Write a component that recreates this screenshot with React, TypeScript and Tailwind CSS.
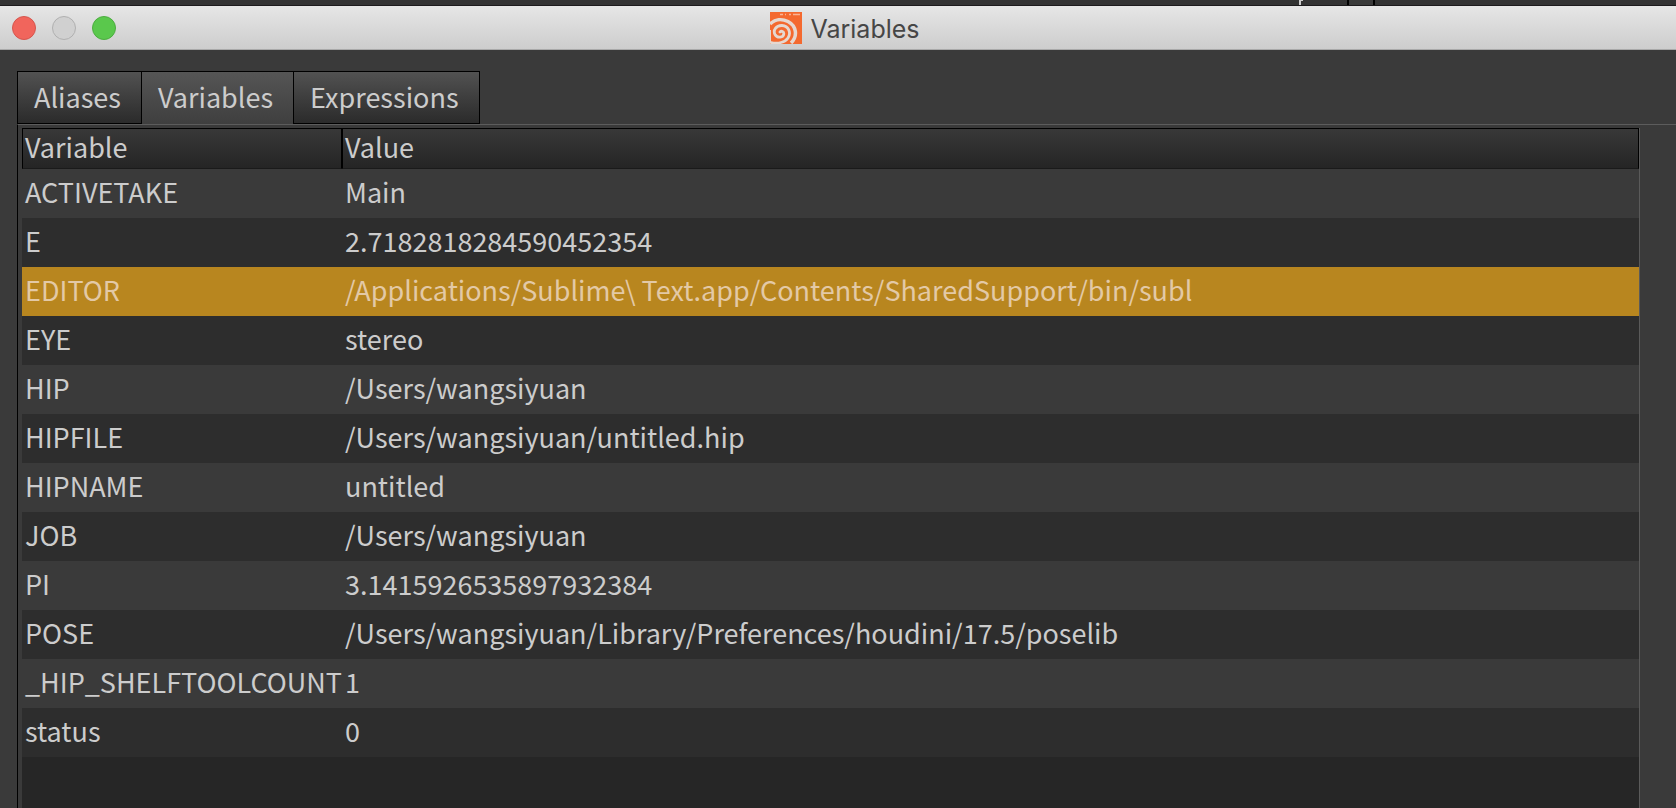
const tabs = ['Aliases', 'Variables', 'Expressions'];

const variables = [
  { name: 'ACTIVETAKE', value: 'Main' },
  { name: 'E', value: '2.7182818284590452354' },
  { name: 'EDITOR', value: '/Applications/Sublime\\ Text.app/Contents/SharedSupport/bin/subl' },
  { name: 'EYE', value: 'stereo' },
  { name: 'HIP', value: '/Users/wangsiyuan' },
  { name: 'HIPFILE', value: '/Users/wangsiyuan/untitled.hip' },
  { name: 'HIPNAME', value: 'untitled' },
  { name: 'JOB', value: '/Users/wangsiyuan' },
  { name: 'PI', value: '3.1415926535897932384' },
  { name: 'POSE', value: '/Users/wangsiyuan/Library/Preferences/houdini/17.5/poselib' },
  { name: '_HIP_SHELFTOOLCOUNT', value: '1' },
  { name: 'status', value: '0' }
];

const activeTab = 'Variables';
const selected = 'EDITOR';

function HoudiniLogo() {
  return (
    <svg className="w-8 h-8" viewBox="0 0 32 32" aria-hidden="true">
      <rect width="32" height="32" fill="#f4692f" />
      <path d="M10 2.5h3M15 2.5h1M19 2.5h2M23 2.5h7" stroke="#f9b494" strokeWidth="1.5" />
      <path
        d="M0 12C5 7 12 6.500 18 9.500C26.500 14 28 24 21 31"
        fill="none"
        stroke="#e6d8d0"
        strokeWidth="3.500"
      />
      <path
        d="M1 30.500C8 32 15 30.500 18 26C21.500 20.500 18.500 13.800 12 13.500C6 13.300 2.800 18.500 5 22.500C7.500 26.800 13.500 25.500 13.800 21.800C13.900 19.500 11.500 18.500 10 20"
        fill="none"
        stroke="#e6d8d0"
        strokeWidth="2.800"
        strokeLinecap="round"
      />
      <path d="M0 18V30" stroke="#e6d8d0" strokeWidth="2" />
    </svg>
  );
}

export default function App() {
  const getRowStyle = (name: string) =>
    name === selected ? 'bg-[#b8861f] text-[#e3c9a6]' : 'odd:bg-[#3a3a3a] even:bg-[#2d2d2d]';

  return (
    <div className="min-h-screen flex flex-col bg-[#3a3a3a] text-[#cccccc] text-[27px] leading-9 font-['Noto_Sans_CJK_SC',sans-serif]">
      {/* Window behind */}
      <div className="h-[6px] flex justify-end bg-[#333333] border-b border-[#1c1a1c]">
        <div className="w-1 mr-11 border-l-2 border-t border-[#cccccc]" />
        <div className="w-7 mr-[301px] border-x-2 border-black bg-[#3a3a3a]" />
      </div>

      {/* Title bar */}
      <header className="relative h-11 flex items-center justify-center pl-[14px] bg-linear-to-b from-[#e6e6e6] to-[#cdcdcd] border-b border-[#a9a9a9]">
        <div className="absolute left-3 flex gap-4">
          <button aria-label="Close" className="w-6 h-6 rounded-full bg-[#f1655c] border border-[#d5564e]" />
          <button aria-label="Minimize" className="w-6 h-6 rounded-full bg-[#d0d0d0] border border-[#b0b0b0]" />
          <button aria-label="Zoom" className="w-6 h-6 rounded-full bg-[#5ac84c] border border-[#4cad40]" />
        </div>
        <div className="flex items-center gap-2">
          <HoudiniLogo />
          <h1 className="pt-[2px] text-[25px] text-[#464646] font-[Inter,sans-serif]">Variables</h1>
        </div>
      </header>

      {/* Tabs */}
      <div role="tablist" className="flex mt-[21px] ml-[17px]">
        {tabs.map((tab) => (
          <button
            key={tab}
            role="tab"
            aria-selected={tab === activeTab}
            className={`h-[53px] pl-4 pr-5 border-t border-l border-black last:border-r bg-linear-to-b ${
              tab === activeTab ? 'pb-[3px] from-[#555555] to-[#3f3f3f]' : 'pb-[2px] from-[#525252] to-[#2b2b2b] border-b'
            }`}
          >
            {tab}
          </button>
        ))}
      </div>

      {/* Tab page */}
      <div className="flex-1 flex ml-[17px] pt-[3px] pl-1 pr-9 border-l border-l-black border-t border-t-[#5c5c5c]">
        <div className="flex-1 bg-[#262626] border-r border-[#5a5a5a]">
          <table className="w-full table-fixed border-separate border-spacing-0 text-left">
            <thead>
              <tr className="bg-linear-to-b from-[#393939] to-[#242424]">
                <th className="w-80 h-[41px] pl-[2px] pb-[3px] font-normal border border-black border-b-[#1a1a1a]">Variable</th>
                <th className="pl-[2px] pb-[3px] font-normal border border-black border-b-[#1a1a1a]">Value</th>
              </tr>
            </thead>
            <tbody>
              {variables.map((variable) => (
                <tr key={variable.name} className={getRowStyle(variable.name)}>
                  <td className="h-[49px] pl-[3px] pb-[3px] whitespace-nowrap">{variable.name}</td>
                  <td className="pl-[3px] pb-[3px] whitespace-nowrap">{variable.value}</td>
                </tr>
              ))}
            </tbody>
          </table>
        </div>
      </div>
    </div>
  );
}
